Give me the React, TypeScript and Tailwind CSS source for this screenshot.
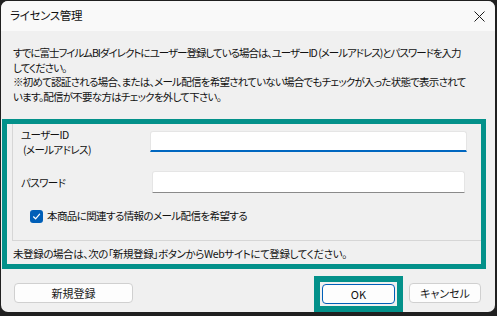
import React from "react"

const FONT = "font-['Noto_Sans_CJK_JP','Noto_Sans',sans-serif] [font-feature-settings:'palt']"

function Button({ label, className = "" }: { label: string; className?: string }) {
  return (
    <button
      className={`h-[20px] rounded-[4px] border border-[#d0d0d0] bg-[#fdfdfd] text-[11px] leading-none text-[#1b1b1b] ${className}`}
    >
      {label}
    </button>
  )
}

export default function App() {
  return (
    <div className={`w-[497px] h-[316px] bg-[#202020] pt-[1px] pl-[1px] ${FONT}`}>
      <div className="w-[494px] h-[311px] rounded-[7px] overflow-hidden bg-[#f0f0f0] flex flex-col text-[#111111]">
        {/* title bar */}
        <div className="h-[30px] shrink-0 bg-[#f9f9f9] flex items-center justify-between pl-[9px] pr-[10px]">
          <span className="text-[11.5px] leading-none tracking-[-0.3px]">ライセンス管理</span>
          <svg width="11" height="11" viewBox="0 0 11 11" className="text-[#1b1b1b]">
            <path d="M0.5 0.5 L10.5 10.5 M10.5 0.5 L0.5 10.5" stroke="currentColor" strokeWidth="1" fill="none" />
          </svg>
        </div>

        {/* description */}
        <div className="shrink-0 pl-[12px] pt-[15px] text-[10.5px] leading-[14.5px] tracking-[-1px] whitespace-nowrap">
          <div>すでに富士フイルムBIダイレクトにユーザー登録している場合は、ユーザーID (メールアドレス)とパスワードを入力</div>
          <div>してください。</div>
          <div className="tracking-[-0.75px]">※初めて認証される場合、または、メール配信を希望されていない場合でもチェックが入った状態で表示されて</div>
          <div className="tracking-[-0.75px]">います。配信が不要な方はチェックを外して下さい。</div>
        </div>

        {/* highlighted group */}
        <div className="shrink-0 mt-[15px] ml-[1px] w-[484px] h-[150px] border-[5px] border-[#03918a] flex flex-col">
          <div className="shrink-0 ml-[5px] h-[117px] border-l border-b border-[#d6d6d6] pl-[8px] text-[10.5px] tracking-[-0.6px] flex flex-col">
            <div className="flex items-start mt-[3px]">
              <div className="w-[129px] leading-[15px]">
                <div>ユーザーID</div>
                <div className="pl-[2px]">(メールアドレス)</div>
              </div>
              <div className="mt-[4px] w-[317px] h-[21px] bg-white border border-[#e5e5e5] border-b-2 border-b-[#0067c0] rounded-t-[3px]" />
            </div>
            <div className="flex items-center mt-[14px]">
              <div className="w-[131px] leading-[15px]">パスワード</div>
              <div className="w-[313px] h-[22px] bg-white border border-[#e5e5e5] border-b-[#8a8a8a] rounded-t-[3px]" />
            </div>
            <div className="flex items-center mt-[17px] ml-[9px]">
              <div className="w-[13px] h-[13px] rounded-[3px] bg-[#005fb8] flex items-center justify-center">
                <svg width="9" height="9" viewBox="0 0 9 9">
                  <path d="M1.5 4.8 L3.6 6.8 L7.6 2.2" stroke="white" strokeWidth="1.2" fill="none" strokeLinecap="round" strokeLinejoin="round" />
                </svg>
              </div>
              <span className="ml-[4px] leading-none">本商品に関連する情報のメール配信を希望する</span>
            </div>
          </div>
          <div className="pl-[6px] mt-[5px] text-[10.5px] leading-[15px] tracking-[-0.4px] whitespace-nowrap">
            未登録の場合は、次の「新規登録」ボタンからWebサイトにて登録してください。
          </div>
        </div>

        {/* buttons */}
        <div className="shrink-0 flex items-start mt-[7px]">
          <Button label="新規登録" className="ml-[13px] mt-[7px] w-[119px]" />
          <div className="ml-[181px] border-[6px] border-[#03918a] p-[2px]">
            <button className="block w-[73px] h-[20px] rounded-[4px] border border-[#005fb8] bg-[#fdfdfd] text-[11px] leading-none">
              OK
            </button>
          </div>
          <Button label="キャンセル" className="ml-[6px] mt-[7px] w-[72px]" />
        </div>
      </div>
    </div>
  )
}
